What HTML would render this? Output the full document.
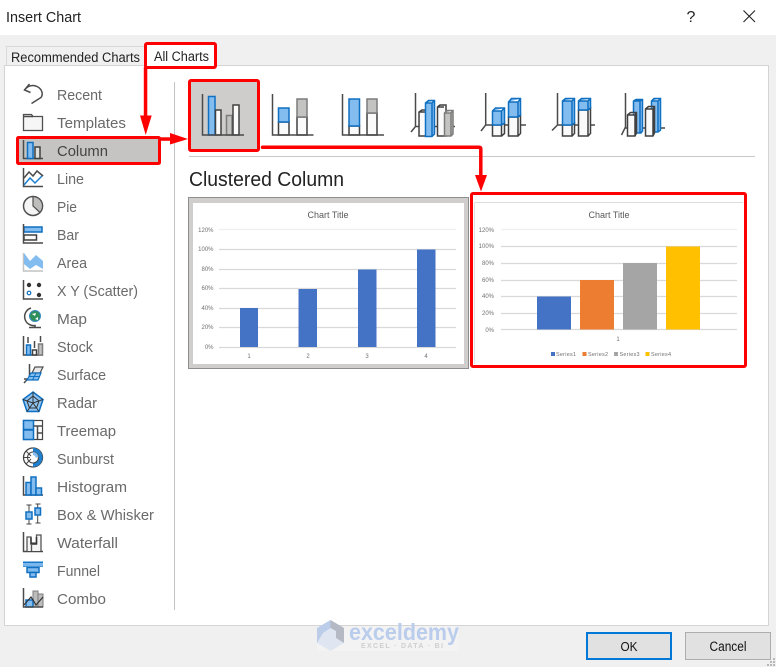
<!DOCTYPE html>
<html lang="en">
<head>
<meta charset="utf-8">
<title>Insert Chart</title>
<style>
html,body{margin:0;padding:0;background:#f0f0f0;width:776px;height:667px;overflow:hidden}
svg{display:block;font-family:"Liberation Sans",sans-serif}
.s text{font-size:14.5px;fill:#6a6a6a}
.d{fill:none;stroke:#4a4a4a;stroke-width:1.5}
.w{fill:#fafafa;stroke:#404040;stroke-width:1.5}
.b{fill:#83bdf0;stroke:#0f6fc0;stroke-width:1.5}
.g{fill:#c3c3c1;stroke:#7c7c7c;stroke-width:1.5}
.ln{fill:none;stroke:#1a7fd0;stroke-width:1.5}
.gr{stroke:#d9d9d9;stroke-width:1.2}
.ax text{font-size:6px;fill:#707070}
</style>
</head>
<body>
<svg width="776" height="667" viewBox="0 0 776 667" xmlns="http://www.w3.org/2000/svg">
<!-- window -->
<rect width="776" height="667" fill="#f0f0f0"/>
<rect width="776" height="35" fill="#fff"/>
<text x="6" y="22" font-size="14.5" fill="#222" textLength="75" lengthAdjust="spacingAndGlyphs">Insert Chart</text>
<text x="691" y="22" font-size="16" fill="#222" text-anchor="middle">?</text>
<path d="M743.5 10.5 L755 22 M755 10.5 L743.5 22" stroke="#222" stroke-width="1.1" fill="none"/>

<!-- tabs and panel -->
<path d="M6.5 65 V46.5 H146 V65" fill="#f0f0f0" stroke="#d9d9d9"/>
<text x="11" y="62" font-size="13.5" fill="#222" textLength="129" lengthAdjust="spacingAndGlyphs">Recommended Charts</text>
<rect x="4.5" y="65.5" width="764" height="560" fill="#fff" stroke="#d4d4d4"/>
<rect x="145.5" y="43.5" width="70" height="24" rx="1.5" fill="#fff" stroke="#fe0000" stroke-width="3"/>
<text x="154" y="61" font-size="13.5" fill="#222" textLength="55" lengthAdjust="spacingAndGlyphs">All Charts</text>

<line x1="174.5" y1="82" x2="174.5" y2="610" stroke="#c4c4c4"/>

<!-- selected side row -->
<rect x="17.5" y="137.5" width="142" height="26" fill="#c5c4c2" stroke="#fe0000" stroke-width="3" rx="1"/>

<!-- side labels -->
<g class="s" transform="translate(0,1)">
<text x="57" y="99" textLength="45" lengthAdjust="spacingAndGlyphs">Recent</text>
<text x="57" y="127" textLength="69" lengthAdjust="spacingAndGlyphs">Templates</text>
<text x="57" y="155" textLength="51" lengthAdjust="spacingAndGlyphs" style="fill:#444">Column</text>
<text x="57" y="183" textLength="27" lengthAdjust="spacingAndGlyphs">Line</text>
<text x="57" y="211" textLength="20" lengthAdjust="spacingAndGlyphs">Pie</text>
<text x="57" y="239" textLength="22" lengthAdjust="spacingAndGlyphs">Bar</text>
<text x="57" y="267" textLength="30" lengthAdjust="spacingAndGlyphs">Area</text>
<text x="57" y="295" textLength="81" lengthAdjust="spacingAndGlyphs">X Y (Scatter)</text>
<text x="57" y="323" textLength="30" lengthAdjust="spacingAndGlyphs">Map</text>
<text x="57" y="351" textLength="36" lengthAdjust="spacingAndGlyphs">Stock</text>
<text x="57" y="379" textLength="49" lengthAdjust="spacingAndGlyphs">Surface</text>
<text x="57" y="407" textLength="40" lengthAdjust="spacingAndGlyphs">Radar</text>
<text x="57" y="435" textLength="59" lengthAdjust="spacingAndGlyphs">Treemap</text>
<text x="57" y="463" textLength="57" lengthAdjust="spacingAndGlyphs">Sunburst</text>
<text x="57" y="491" textLength="70" lengthAdjust="spacingAndGlyphs">Histogram</text>
<text x="57" y="519" textLength="97" lengthAdjust="spacingAndGlyphs">Box &amp; Whisker</text>
<text x="57" y="547" textLength="61" lengthAdjust="spacingAndGlyphs">Waterfall</text>
<text x="57" y="575" textLength="43" lengthAdjust="spacingAndGlyphs">Funnel</text>
<text x="57" y="603" textLength="49" lengthAdjust="spacingAndGlyphs">Combo</text>
</g>

<!-- side icons -->
<!-- recent -->
<path class="d" d="M29.5 84 L24.5 90 L30.5 92.5 M24.5 90 C28 85.5 33 84.5 37 86.5 C42 89 43.5 94 41 97.5 L31.5 103.5"/>
<!-- templates -->
<path d="M23.5 115.5 V130.5 H42.5 V116.5 H33 L31.5 114.5 H23.5 Z" fill="#f6f6f6" stroke="#505050" stroke-width="1.3"/>
<path d="M23.5 116.5 H33" class="d"/>
<!-- column -->
<path class="d" d="M23.5 140 V158.5 H43"/>
<rect class="b" x="27.5" y="142.5" width="5.5" height="16"/>
<rect class="w" x="35" y="147" width="5" height="11.5" style="fill:#dededc"/>
<!-- line -->
<path class="d" d="M23.5 168 V186.5 H43"/>
<path class="ln" d="M24 185 L30 178 L35 183 L43 175"/>
<path class="d" d="M24 178 L29 172 L33 176 L37 171 L43 176"/>
<!-- pie -->
<circle cx="33" cy="206" r="9.5" fill="#f5f5f5" stroke="#505050" stroke-width="1.5"/>
<path d="M33 206 V196.5 A9.5 9.5 0 0 1 40 212.5 Z" fill="#bdbdbb" stroke="#505050" stroke-width="1.2"/>
<!-- bar -->
<rect class="b" x="24" y="227" width="18" height="5"/>
<rect class="w" x="24" y="235" width="12.5" height="5"/>
<path class="d" d="M23.5 224 V243 H43"/>
<!-- area -->
<path d="M23.5 253 V271 H43" fill="none" stroke="#c2c2c2" stroke-width="1.5"/>
<path d="M24 253 L30 261 L36 255 L43 261 L43 269 L36 265 L30 269 L24 264 Z" fill="#83bdf0"/>
<!-- xy -->
<path class="d" d="M23.5 280 V299 H43"/>
<circle cx="29" cy="285" r="2.2" fill="#333"/>
<circle cx="39" cy="285" r="2.2" fill="#333"/>
<circle cx="39" cy="295" r="2.2" fill="#333"/>
<circle cx="29" cy="293" r="1.8" fill="#fff" stroke="#0f6fc0" stroke-width="1.2"/>
<!-- map -->
<circle cx="35" cy="316" r="5.5" fill="#2f8f5b" stroke="#3a8ac0"/>
<path d="M32 314 L36 313 L35 316 Z M35 319 L38 317 L38 320 Z" fill="#fff"/>
<path class="d" d="M31 308 A9 9 0 0 0 35 325.5 V327 M29 327.5 H41"/>
<!-- stock -->
<path class="d" d="M23.5 336 V355 H43"/>
<rect class="b" x="26.5" y="345" width="4" height="10"/>
<rect class="w" x="32.5" y="350" width="4" height="5"/>
<rect class="g" x="38.5" y="344" width="4" height="11"/>
<path class="d" d="M28 337 V343 M34.5 341 V348 M40.5 336 V342"/>
<!-- surface -->
<path class="d" d="M29.5 364 V377 L24 383 M24 379 H30"/>
<path d="M35 367 H43 L40 373 H32 Z" fill="#e8e8e8" stroke="#505050" stroke-width="1.2"/>
<path d="M31 373 H41 L38 380 H27 Z" fill="#83bdf0" stroke="#0f6fc0" stroke-width="1.2"/>
<path d="M36 373 L32.5 380 M29 376.5 H39.5" stroke="#0f6fc0" fill="none"/>
<!-- radar -->
<path d="M33 392 L43 399.5 L39 411.5 H27 L23 399.5 Z" fill="#8ec3f1" stroke="#0f6fc0" stroke-width="1.5"/>
<path d="M33 396 L39 401 L36.5 408 H29.5 L27 401 Z M33 392 V403 M23 399.5 L33 403 L43 399.5 M27 411.5 L33 403 L39 411.5" fill="none" stroke="#333" stroke-width="1"/>
<!-- treemap -->
<rect x="23.5" y="420.5" width="19" height="19" fill="#fff" stroke="#444" stroke-width="1.2"/>
<rect x="23.5" y="420.5" width="10" height="9" class="b"/>
<rect x="23.5" y="430" width="10" height="9.5" class="b"/>
<path class="d" d="M33.5 426 H42.5 M37.5 426 V439.5 M37.5 433 H42.5"/>
<!-- sunburst -->
<circle cx="33" cy="457.5" r="9.5" fill="#fff" stroke="#444" stroke-width="1.3"/>
<path d="M33 448 A9.5 9.5 0 0 1 33 467 V463 A5.5 5.5 0 0 0 33 452 Z" fill="#1f80cf"/>
<circle cx="33" cy="457.5" r="5.5" fill="none" stroke="#444"/>
<path d="M33 452 A5.5 5.5 0 0 1 38.5 457.5 H35.5 A2.5 2.5 0 0 0 33 455 Z" fill="#83bdf0"/>
<path d="M23.5 457.5 H30 M26 451 L31 456 M26 464 L31 459" stroke="#444" fill="none"/>
<!-- histogram -->
<path class="d" d="M23.5 476 V495 H43"/>
<rect class="b" x="26" y="482.5" width="5" height="12.5"/>
<rect class="b" x="31" y="477" width="5" height="18"/>
<rect class="b" x="36" y="488" width="5.5" height="7"/>
<!-- box -->
<path d="M29 505 V524 M26.5 505 H31.5 M26.5 524 H31.5 M37.7 504 V523 M35.5 504 H40.5 M35.5 523 H40.5" stroke="#444" fill="none"/>
<rect class="b" x="26" y="512" width="6" height="7"/>
<rect class="b" x="35" y="508" width="5.5" height="7"/>
<!-- waterfall -->
<path class="d" d="M23.5 532 V551.5 H43"/>
<path d="M27 551 V537 H31 V543 H36.5 V535 H41 V551 M31.5 551 V545" fill="#f5f5f5" stroke="#555" stroke-width="1.3"/>
<path d="M31 537.5 V544 H36.5 V537" fill="none" stroke="#333" stroke-width="1.5"/>
<!-- funnel -->
<rect x="23" y="561.5" width="20" height="5.5" fill="#1577c8"/>
<rect x="23" y="563" width="20" height="3.5" fill="#7ab7ec"/>
<rect class="b" x="27" y="567.5" width="12" height="5"/>
<rect class="b" x="30" y="572.5" width="6" height="4.5"/>
<!-- combo -->
<rect x="33" y="591" width="5" height="16" fill="#bdbdbb" stroke="#7c7c7c"/>
<rect x="38" y="594" width="5" height="13" fill="#bdbdbb" stroke="#7c7c7c"/>
<rect class="b" x="26" y="600" width="7" height="7"/>
<path class="d" d="M23.5 588 V607 H43"/>
<path d="M24 605 L31 597 L36 605 L43 597" fill="none" stroke="#333" stroke-width="1.2"/>

<!-- sub type row -->
<rect x="189.5" y="80.5" width="69" height="70" rx="1.5" fill="#cfcdcb" stroke="#fe0000" stroke-width="3"/>
<rect class="b" x="208.5" y="96.5" width="6.5" height="38.5"/>
<rect class="w" x="215.5" y="110" width="5.5" height="25"/>
<rect class="g" x="226.5" y="115.5" width="5.5" height="19.5"/>
<rect class="w" x="233" y="105" width="6" height="30"/>
<path class="d" d="M202.5 94 V135 H244"/>

<rect class="w" x="278.5" y="122" width="10.5" height="13"/>
<rect class="b" x="278.5" y="108" width="10.5" height="14"/>
<rect class="w" x="297" y="117" width="10" height="18"/>
<rect class="g" x="297" y="99" width="10" height="18"/>
<path class="d" d="M272.5 94 V135 H313.5"/>

<rect class="w" x="349" y="126" width="10.5" height="9"/>
<rect class="b" x="349" y="99" width="10.5" height="27"/>
<rect class="w" x="367" y="113" width="10" height="22"/>
<rect class="g" x="367" y="99" width="10" height="14"/>
<path class="d" d="M342.5 94 V135 H384"/>

<!-- 3D clustered -->
<path class="d" d="M415.5 93 V126.5 L411 132 M415.5 126.5 H455"/>
<path class="w" d="M419 112 L422 110 H428 V136 H419 Z M419 112 H425"/>
<path class="b" d="M425.5 103 L428.5 100.5 H434.5 V134 L432 136.5 H425.5 Z M425.5 103 H432 L434.5 100.5 M432 103 V136.5"/>
<path class="w" d="M437.5 107 L440 105 H446 V136 H437.5 Z M437.5 107 H444"/>
<path class="g" d="M444.5 113 L447 110.5 H453 V134 L451 136 H444.5 Z M444.5 113 H451 L453 110.5 M451 113 V136"/>

<!-- 3D stacked -->
<path class="d" d="M485.7 93 V125 L481 131 M485.7 125 H526"/>
<path class="w" d="M492.5 125 H501.5 V136 H492.5 Z M501.5 125 L504.5 123 V133.5 L501.5 136"/>
<path class="b" d="M492.5 111 L495.5 108 H504.5 V123 L501.5 125 H492.5 Z M492.5 111 H501.5 L504.5 108 M501.5 111 V125"/>
<path class="w" d="M508.5 117 H518 V136 H508.5 Z M518 117 L520.5 115 V133.5 L518 136"/>
<path class="b" d="M508.5 102 L511.5 98.5 H520.5 V115 L518 117 H508.5 Z M508.5 102 H518 L520.5 98.5 M518 102 V117"/>

<!-- 3D 100% stacked -->
<path class="d" d="M557.5 93 V125 L552 130.5 M557.5 125 H595"/>
<path class="w" d="M562.5 125 H572 V136 H562.5 Z M572 125 L574.5 123 V133.5 L572 136"/>
<path class="b" d="M562.5 101 L565.5 98.5 H574.5 V123 L572 125 H562.5 Z M562.5 101 H572 L574.5 98.5 M572 101 V125"/>
<path class="w" d="M578.5 110 H588 V136 H578.5 Z M588 110 L590.5 108 V133.5 L588 136"/>
<path class="b" d="M578.5 101 L581.5 98.5 H590.5 V108 L588 110 H578.5 Z M578.5 101 H588 L590.5 98.5 M588 101 V110"/>

<!-- 3D column -->
<path class="d" d="M625.5 93 V127 L621.5 135 M625.5 128 H665"/>
<path class="b" d="M633.5 101 L636 99.5 H642.5 V131 L641 133 H633.5 Z M633.5 101 H640 L642.5 99.5 M640 101 V133"/>
<path class="b" d="M651.5 101 L654 98.5 H660.5 V130 L658 132 H651.5 Z M651.5 101 H658 L660.5 98.5 M658 101 V132"/>
<path class="w" d="M627.5 115 L630.5 112.5 H636.5 V133 L635 136 H627.5 Z M627.5 115 H635 L636.5 112.5 M635 115 V136"/>
<path class="w" d="M645.5 109 L648.5 106.5 H654.5 V133 L653 136 H645.5 Z M645.5 109 H653 L654.5 106.5 M653 109 V136"/>

<line x1="189" y1="156.5" x2="755" y2="156.5" stroke="#c8c8c8"/>
<text x="189" y="186" font-size="20" fill="#222" textLength="155" lengthAdjust="spacingAndGlyphs">Clustered Column</text>

<!-- left preview -->
<rect x="188.5" y="197.5" width="280" height="171" fill="#d0cecc" stroke="#8e8e8c"/>
<rect x="193" y="203" width="271" height="161" fill="#fff"/>
<text x="328" y="218" font-size="9" fill="#5a5a5a" text-anchor="middle">Chart Title</text>
<g class="gr">
<line x1="219" y1="229.5" x2="456" y2="229.5" stroke="#eee"/>
<line x1="219" y1="249.5" x2="456" y2="249.5"/>
<line x1="219" y1="269.5" x2="456" y2="269.5"/>
<line x1="219" y1="288.5" x2="456" y2="288.5"/>
<line x1="219" y1="308.5" x2="456" y2="308.5"/>
<line x1="219" y1="327.5" x2="456" y2="327.5"/>
<line x1="219" y1="347.5" x2="456" y2="347.5"/>
</g>
<g class="ax" text-anchor="end">
<text x="213.5" y="232">120%</text>
<text x="213.5" y="251">100%</text>
<text x="213.5" y="271">80%</text>
<text x="213.5" y="290">60%</text>
<text x="213.5" y="310">40%</text>
<text x="213.5" y="329">20%</text>
<text x="213.5" y="349">0%</text>
</g>
<rect x="240" y="308" width="18" height="39" fill="#4472c4"/>
<rect x="298.5" y="289" width="18.5" height="58" fill="#4472c4"/>
<rect x="358" y="269.5" width="18.5" height="77.5" fill="#4472c4"/>
<rect x="417" y="249.5" width="18.5" height="97.5" fill="#4472c4"/>
<g class="ax" text-anchor="middle">
<text x="249" y="358">1</text>
<text x="308" y="358">2</text>
<text x="367" y="358">3</text>
<text x="426" y="358">4</text>
</g>

<!-- right preview -->
<rect x="471.5" y="193.5" width="274" height="173" rx="1.5" fill="#fff" stroke="#fe0000" stroke-width="3"/>
<line x1="474" y1="202.5" x2="743" y2="202.5" stroke="#dcdcdc"/>
<line x1="474.5" y1="202" x2="474.5" y2="364" stroke="#e2e2e2"/>
<text x="609" y="218" font-size="9" fill="#5a5a5a" text-anchor="middle">Chart Title</text>
<g class="gr">
<line x1="501" y1="229.5" x2="737" y2="229.5" stroke="#eee"/>
<line x1="501" y1="246.5" x2="737" y2="246.5"/>
<line x1="501" y1="263.5" x2="737" y2="263.5"/>
<line x1="501" y1="280.5" x2="737" y2="280.5"/>
<line x1="501" y1="296.5" x2="737" y2="296.5"/>
<line x1="501" y1="313.5" x2="737" y2="313.5"/>
<line x1="501" y1="329.5" x2="737" y2="329.5"/>
</g>
<g class="ax" text-anchor="end">
<text x="494" y="232">120%</text>
<text x="494" y="248">100%</text>
<text x="494" y="265">80%</text>
<text x="494" y="282">60%</text>
<text x="494" y="298">40%</text>
<text x="494" y="315">20%</text>
<text x="494" y="332">0%</text>
</g>
<rect x="537" y="296.5" width="34" height="33" fill="#4472c4"/>
<rect x="580" y="280" width="34" height="49.5" fill="#ed7d31"/>
<rect x="623" y="263" width="34" height="66.5" fill="#a5a5a5"/>
<rect x="666" y="246.5" width="34" height="83" fill="#ffc000"/>
<g class="ax">
<text x="618" y="341" text-anchor="middle">1</text>
<rect x="551" y="352" width="4" height="4" fill="#4472c4"/>
<text x="556" y="356" style="font-size:5.5px" textLength="20">Series1</text>
<rect x="582.5" y="352" width="4" height="4" fill="#ed7d31"/>
<text x="588" y="356" style="font-size:5.5px" textLength="20">Series2</text>
<rect x="614" y="352" width="4" height="4" fill="#a5a5a5"/>
<text x="619.5" y="356" style="font-size:5.5px" textLength="20">Series3</text>
<rect x="645.5" y="352" width="4" height="4" fill="#ffc000"/>
<text x="651" y="356" style="font-size:5.5px" textLength="20">Series4</text>
</g>

<!-- red arrows -->
<rect x="143.8" y="67" width="3.5" height="50" fill="#fe0000"/>
<path d="M140 115.5 H151.7 L145.7 135 Z" fill="#fe0000"/>
<rect x="160" y="137.3" width="12" height="3.5" fill="#fe0000"/>
<path d="M170 133 L188 139 L170 144.5 Z" fill="#fe0000"/>
<path d="M262.5 147.3 H479 Q480.8 147.3 480.8 149 V177" fill="none" stroke="#fe0000" stroke-width="3.5" stroke-linecap="round"/>
<path d="M475 175 H487 L481 191.5 Z" fill="#fe0000"/>

<!-- watermark -->
<rect x="317" y="626" width="142" height="25" fill="#f3f3f3"/>
<path d="M330.5 620 L344 628 V643 L330.5 651 L317 643 V628 Z" fill="#dfe6f2"/>
<path d="M330.5 620 L344 628 V643 L336 638 V631 L330.5 628 Z" fill="#b4b9c4"/>
<path d="M330.5 620 L330.5 628 L323 633 L317 643 V628 Z" fill="#bccdea"/>
<text x="349" y="640" font-size="23" font-weight="bold" fill="#bbcdec" textLength="110" lengthAdjust="spacingAndGlyphs">exceldemy</text>
<text x="361" y="648" font-size="7" font-weight="bold" fill="#cfcfcf" textLength="82">EXCEL · DATA · BI</text>

<!-- buttons -->
<rect x="587" y="633" width="84" height="26" fill="#e1e1e1" stroke="#0078d7" stroke-width="2"/>
<text x="620.500" y="651" font-size="13" fill="#111" textLength="17" lengthAdjust="spacingAndGlyphs">OK</text>
<rect x="685.5" y="632.5" width="85" height="27" fill="#e1e1e1" stroke="#adadad"/>
<text x="709.500" y="651" font-size="13.500" fill="#111" textLength="37" lengthAdjust="spacingAndGlyphs">Cancel</text>

<!-- grip -->
<g fill="#b8b8b8">
<rect x="773" y="658" width="2" height="2"/>
<rect x="770" y="661" width="2" height="2"/>
<rect x="773" y="661" width="2" height="2"/>
<rect x="767" y="664" width="2" height="2"/>
<rect x="770" y="664" width="2" height="2"/>
<rect x="773" y="664" width="2" height="2"/>
</g>
</svg>
</body>
</html>
